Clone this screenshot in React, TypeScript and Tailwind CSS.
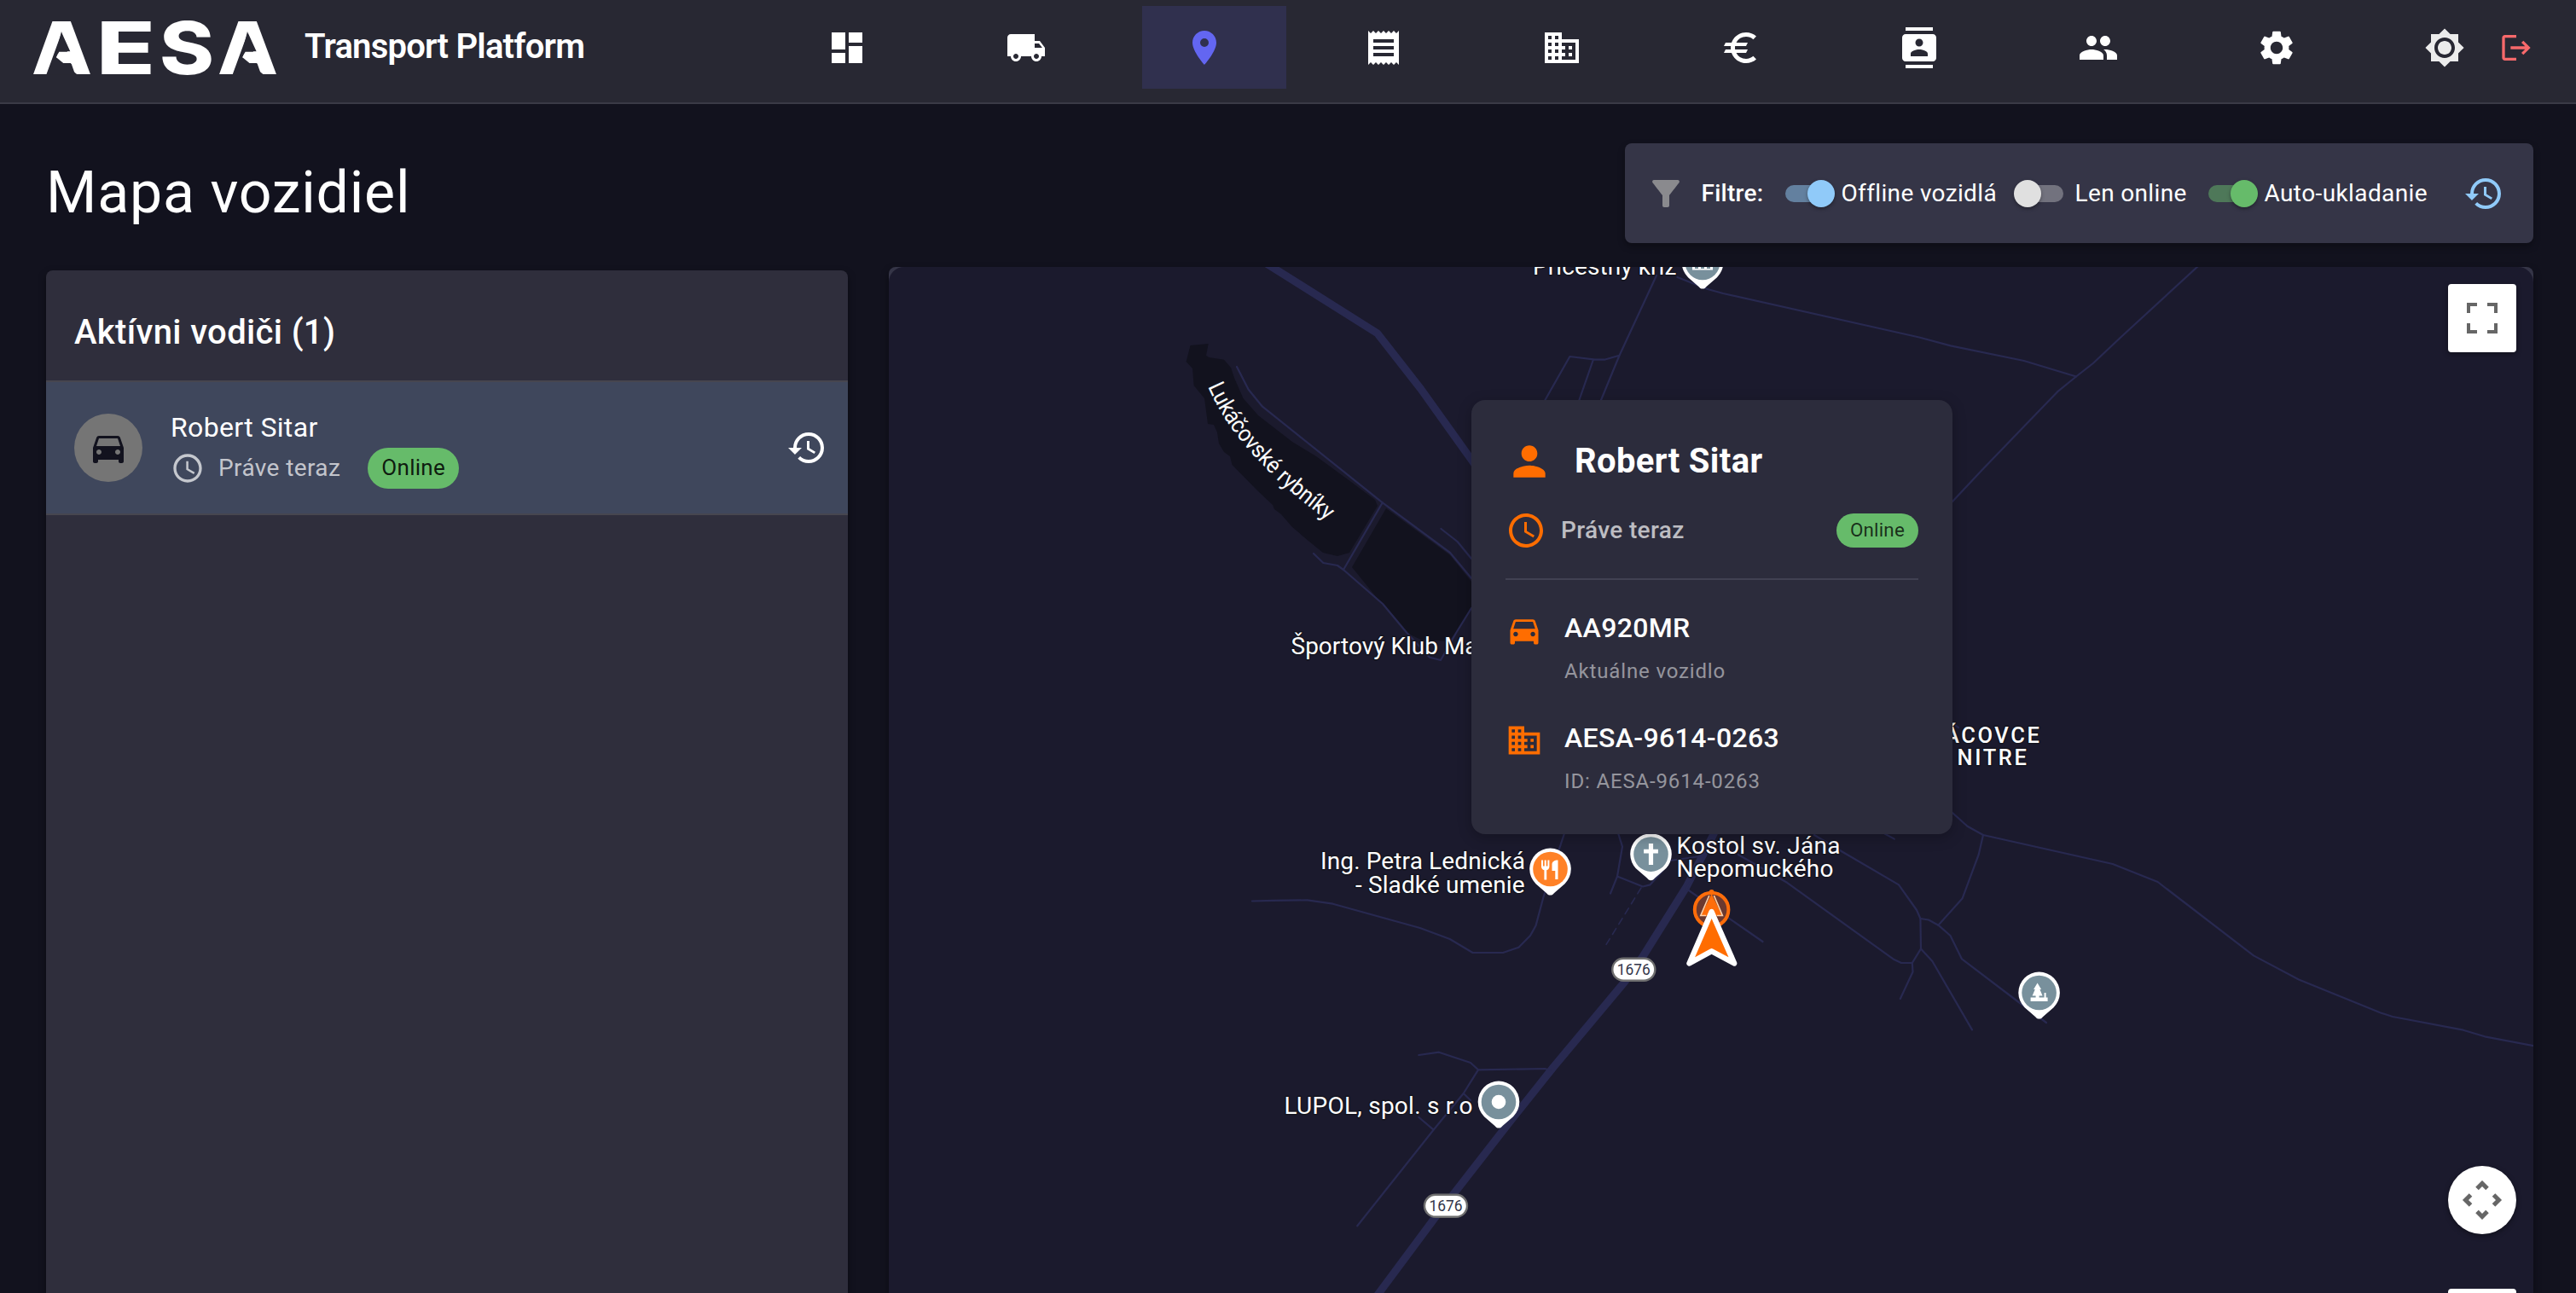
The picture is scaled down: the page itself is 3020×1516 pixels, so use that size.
import type { ReactNode } from "react";
import {
  MdAccessTime,
  MdBrightness7,
  MdBusiness,
  MdContacts,
  MdDashboard,
  MdDirectionsCar,
  MdEuro,
  MdFilterAlt,
  MdHistory,
  MdLocalShipping,
  MdLocationOn,
  MdLogout,
  MdPeople,
  MdPerson,
  MdReceipt,
  MdSettings,
} from "react-icons/md";

const navItems = [
  { id: "dashboard", Icon: MdDashboard, active: false },
  { id: "transports", Icon: MdLocalShipping, active: false },
  { id: "map", Icon: MdLocationOn, active: true },
  { id: "invoices", Icon: MdReceipt, active: false },
  { id: "companies", Icon: MdBusiness, active: false },
  { id: "finance", Icon: MdEuro, active: false },
  { id: "contacts", Icon: MdContacts, active: false },
  { id: "team", Icon: MdPeople, active: false },
  { id: "settings", Icon: MdSettings, active: false },
];

/** The curved notch that opens the crossbar of each A in the wordmark. */
function LogoNotch({ dx }: { dx: number }) {
  return (
    <g transform={`translate(${dx} 0)`}>
      <path d="M72.300 38.300L82.300 60.300H69.300L66 67.300L90.700 87.500H54.300Z" fill="#282833" />
      <path d="M69.300 60.700H84L92 66L100 86.500H91.300C87 75 78.500 68.500 66 67.300Z" fill="#ffffff" />
    </g>
  );
}

function Logo() {
  return (
    <svg className="h-[90px] w-[330px] shrink-0 overflow-visible" viewBox="20 10 330 90" aria-label="AESA">
      <text y="86.600" fill="#ffffff" className="font-['Inter'] text-[85.500px] font-extrabold">
        <tspan x="37" textLength="71" lengthAdjust="spacingAndGlyphs">A</tspan>
        <tspan x="113" textLength="69" lengthAdjust="spacingAndGlyphs">E</tspan>
        <tspan x="187" textLength="64" lengthAdjust="spacingAndGlyphs">S</tspan>
        <tspan x="255" textLength="71" lengthAdjust="spacingAndGlyphs">A</tspan>
      </text>
      <LogoNotch dx={0} />
      <LogoNotch dx={218.3} />
    </svg>
  );
}

function Header() {
  return (
    <header className="flex h-[122px] shrink-0 items-start border-b-2 border-[#3a3a46] bg-[#282833]">
      <div className="flex h-[110px] w-[920px] items-center pl-5">
        <Logo />
        <span className="ml-[7px] whitespace-nowrap text-[40px] font-semibold tracking-[-0.780px] text-white">
          Transport Platform
        </span>
      </div>
      <nav className="flex h-[111px] items-center gap-[40.5px]">
        {navItems.map(({ id, Icon, active }) => (
          <div
            key={id}
            className={
              active
                ? "flex h-[97px] w-[169px] items-center bg-[#30304e] pl-[49px] text-[#6366f1]"
                : "flex h-[97px] w-[169px] items-center pl-[49px] text-white"
            }
          >
            <Icon className="size-12" />
          </div>
        ))}
      </nav>
      <div className="ml-auto flex h-[111px] items-center gap-[40px] pr-[50px]">
        <MdBrightness7 className="size-12 text-[#ececec]" />
        <MdLogout className="size-10 text-[#f8696b]" />
      </div>
    </header>
  );
}

function Toggle({ on, thumb, track }: { on: boolean; thumb: string; track: string }) {
  return (
    <span className="relative flex h-12 w-20 shrink-0 items-center px-3.5">
      <span className={`h-5 w-full rounded-full ${track}`} />
      <span
        className={`absolute top-2 size-8 rounded-full shadow-[0_2px_4px_rgba(0,0,0,0.35)] ${thumb} ${
          on ? "left-10" : "left-2"
        }`}
      />
    </span>
  );
}

function Filters() {
  return (
    <div className="flex h-[117px] w-[1065px] items-center rounded-lg bg-[#353547] text-[28px] text-white shadow-[0_4px_8px_rgba(0,0,0,0.3)]">
      <MdFilterAlt className="ml-6 size-12 text-[#8a8a8e]" />
      <span className="ml-[17.500px] w-[84px] whitespace-nowrap font-medium tracking-[0.250px]">Filtre:</span>
      <Toggle on thumb="bg-[#90caf9]" track="bg-[#63809f]" />
      <span className="w-[194px] whitespace-nowrap tracking-[0.350px]">Offline vozidlá</span>
      <Toggle on={false} thumb="bg-[#e0e0e0]" track="bg-[#72727e]" />
      <span className="w-[142px] whitespace-nowrap tracking-[0.350px]">Len online</span>
      <Toggle on thumb="bg-[#66bb6a]" track="bg-[#4e7859]" />
      <span className="whitespace-nowrap tracking-[0.400px]">Auto-ukladanie</span>
      <MdHistory className="ml-auto mr-[34px] size-12 text-[#90caf9]" />
    </div>
  );
}

function DriversPanel() {
  return (
    <aside className="mt-1 flex w-[940px] flex-col rounded-t-lg bg-[#2f2e3c] shadow-[0_4px_10px_rgba(0,0,0,0.4)]">
      <h2 className="flex h-[129px] items-center pl-[33px] pt-[16px] text-[40px] font-medium tracking-[0.350px] text-white">
        Aktívni vodiči (1)
      </h2>
      <div className="flex h-[158px] items-center border-y-2 border-[#47464f] bg-[#3f475c] pl-[33px] pr-6">
        <div className="flex size-20 items-center justify-center rounded-full bg-[#757575]">
          <MdDirectionsCar className="size-12 text-[#12121e]" />
        </div>
        <div className="ml-[33px]">
          <div className="text-[32px] leading-[47px] tracking-[0.350px] text-white">Robert Sitar</div>
          <div className="flex h-12 items-center">
            <MdAccessTime className="size-10 text-white/70" />
            <span className="ml-4 text-[28px] tracking-[0.400px] text-white/70">Práve teraz</span>
            <span className="ml-8 flex h-12 items-center rounded-full bg-[#66bb6a] px-4 text-[26px] tracking-[0.300px] text-black/87">
              Online
            </span>
          </div>
        </div>
        <MdHistory className="ml-auto size-12 text-white" />
      </div>
    </aside>
  );
}

/** Teardrop place marker whose round head is centred on (x, y). */
function PlacePin({ x, y, color, children }: { x: number; y: number; color: string; children: ReactNode }) {
  return (
    <g transform={`translate(${x} ${y})`}>
      <path d="M0 30.6c-2 0-3.4-1-4.6-2.6L-17 17.2A24.3 24.3 0 1 1 17 17.2L4.6 28C3.400 29.600 2 30.600 0 30.600z" fill="#ffffff" />
      <circle r="20.300" fill={color} />
      {children}
    </g>
  );
}

function Shield({ x, y }: { x: number; y: number }) {
  return (
    <g transform={`translate(${x} ${y})`}>
      <rect x="-25" y="-13" width="50" height="26" rx="13" fill="#ffffff" stroke="#6f6f6f" strokeWidth="2.400" />
      <text y="6.600" textAnchor="middle" textLength="39" lengthAdjust="spacingAndGlyphs" className="text-[18.600px]" fill="#33364a">
        1676
      </text>
    </g>
  );
}

function MapCanvas() {
  return (
    <svg className="block h-[1203px] w-[1928px]" viewBox="1042 313 1928 1203">
      <g fill="#12121e">
        <path d="M1395.500 405L1416.700 403L1414 417L1417.500 419L1435 421.700L1443 431L1447 443L1457.500 467L1475 487L1515 518L1543 535L1584 565L1612 586L1615 593L1582 648L1568 652L1551 648L1535 635L1515 618L1502 603L1494 597L1492 592L1474 575L1444.500 545L1442 535L1435 530L1429 520L1427 507L1423 498L1416 497L1412 467L1399.600 452L1398 432L1390.600 424Z" />
        <path d="M1625 596L1700 651L1725 682L1725 713L1706.500 742L1698 752L1666 750L1649 742L1619 707L1585 665Z" />
      </g>
      <g fill="none" stroke="#282950" strokeLinejoin="round" strokeLinecap="round">
        <g strokeWidth="9">
          <path d="M1480 306L1614.700 390.700L1665.700 456L1725 539L1750 575" />
          <path d="M2015 960L2009 978L1977 1040L1926 1121.500L1904 1152L1821 1251.400L1763.500 1323.600L1706 1397.600L1680.600 1430L1610 1525" />
        </g>
        <g strokeWidth="2.200">
          <path d="M1450 430L1463.700 456.700L1480 476.700L1620.800 589.300L1700 648L1725 678" />
          <path d="M1620.800 589.300L1575 668" />
          <path d="M1540 649L1551.400 660L1568 663L1575 668L1621 708L1649.400 742L1676 770.700L1689 774L1706.500 743L1725 713" />
          <path d="M1689.400 620L1708.600 635L1725 655" />
          <path d="M1942 323L1898.400 417L1877 469M1811.400 469L1840.400 418L1870 421.700L1881 421.700L1898.400 416.700M1867.800 422L1851.400 469" />
          <path d="M1966.500 325L2002 339L2020 344L2250 395.500L2286.800 405.400L2372.800 423L2434 441.500" />
          <path d="M2577 312L2485.700 396L2453.800 426L2434 441.500L2412 459.400L2375 497.800L2323.700 551L2289 588" />
          <path d="M2280 944L2289 953L2306.500 968.800L2325 979L2476.800 1013L2529.600 1034L2642 1120.400L2695 1148.500L2791 1187.500L2805 1192L2887.800 1207.700L2913 1215.300L2972 1226.500" />
          <path d="M2325 979L2319.700 1002L2300.500 1053.600L2272.400 1084.700" />
          <path d="M2127 979L2160 998.700L2226 1037.400L2247 1067L2251.400 1077L2261 1078.500L2272.400 1084.700L2286.500 1097L2300 1124.400L2366 1174.500L2399 1199" />
          <path d="M2251.400 1077L2252 1112.400L2241.800 1129L2229 1129L2219.500 1124.400L2095 1034.800L2037.800 1002" />
          <path d="M2241.800 1129L2242.500 1139.500L2227.800 1171M2252 1112.400L2265.400 1127L2312 1207.400M2205 975L2220.800 983.600M2286 846L2296 853" />
          <path d="M1468 1056.500L1492.500 1055.800L1532.700 1055.400L1562.600 1059.700L1664.700 1088L1699.700 1101L1726.500 1117L1762 1117L1780.700 1110.600L1794 1097L1800.500 1085.400L1809.400 1052L1833.700 978" />
          <path d="M1897.400 978L1902 992.600L1896 1027.600L1888 1047.500M1896 1027.600L1926 1039.500L1934.400 1037.400L1950 1020M1958 1009L2000 1003L1977 1042L2066.500 1104" />
          <path d="M1924 1041L1881.500 1110" strokeWidth="1.600" strokeDasharray="8 6" />
          <path d="M1663.400 1237L1687 1233.700L1724 1246L1733 1254.300L1811 1253L1818 1255M1733 1254.300L1715.700 1282L1680.600 1324.700L1591.300 1437.300M1715.700 1282L1724 1290M1663.400 1310L1680.600 1324.700" />
        </g>
      </g>

      <path id="ponds-label" d="M1416 453C1438 503 1468 533 1498 563C1515 579 1540 598 1580 630" fill="none" />
      <g fill="#ffffff" stroke="#15151f" strokeWidth="3" paintOrder="stroke" strokeLinejoin="round" className="text-[28px]">
        <text className="text-[27px]">
          <textPath href="#ponds-label" textLength="213" lengthAdjust="spacingAndGlyphs">
            Lukáčovské rybníky
          </textPath>
        </text>
        <text x="1797" y="322.300" textLength="168.500">Prícestný kríž</text>
        <text x="1513.500" y="766.700">Športový Klub Ma</text>
        <text x="1548" y="1019" textLength="240">Ing. Petra Lednická</text>
        <text x="1589" y="1047" textLength="198.500">- Sladké umenie</text>
        <text x="1965.500" y="1000.700" textLength="192">Kostol sv. Jána</text>
        <text x="1965.500" y="1028.300" textLength="184">Nepomuckého</text>
        <text x="1505.500" y="1305.600" textLength="221">LUPOL, spol. s r.o</text>
        <g className="text-[25.500px] font-medium tracking-[2.600px]" textAnchor="end">
          <text x="2393.500" y="871">ÁCOVCE</text>
          <text x="2378.500" y="897">NITRE</text>
        </g>
      </g>

      <PlacePin x={1996} y={308} color="#78909c">
        <path d="M-12 8.500h24V5h-3v2h-4V5h-3v2h-4V5h-3v2h-4V5h-3z" fill="#ffffff" />
      </PlacePin>
      <PlacePin x={1817.500} y={1019} color="#ff8126">
        <path d="M-10.500-10.500h2v7h1.700v-7h2v7h1.700v-7h2v7.500c0 2.300-1.300 3.800-3.200 4.300v11.200h-2.800V1.300c-2-.5-3.400-2-3.400-4.300zM9-10.500v22.500H5.800V2H2v-7.500c0-3 2.500-5 7-5z" fill="#ffffff" />
      </PlacePin>
      <PlacePin x={1935.500} y={1001.600} color="#78909c">
        <path d="M-2.600-12.500h5.200v6.700h5.800v4.600H2.600v13.700h-5.200V-1.200h-5.800v-4.600h5.800z" fill="#ffffff" />
      </PlacePin>
      <PlacePin x={1757} y={1292} color="#78909c">
        <circle r="8.300" fill="#ffffff" />
      </PlacePin>
      <PlacePin x={2390.600} y={1164} color="#78909c">
        <path d="M-2-11.500L2.500-4H.8L4 3.500H0V5.500h6V0h2v5.500h2v4.500h-20v-4.500h6v-2h-4L-4.800-4h-1.700z" fill="#ffffff" />
      </PlacePin>

      <Shield x={1915.300} y={1136.700} />
      <Shield x={1695} y={1413.800} />

      <circle cx="2006.600" cy="1066.500" r="19.800" fill="#6b392f" stroke="#ff6d0a" strokeWidth="4" />
      <circle cx="2006.600" cy="1046" r="3" fill="#ff6d0a" />
      <path d="M2006.600 1048L1993.800 1074H2019.400Z" fill="#ff6d0a" />
      <path d="M2003.800 1050L1993.800 1073.500H2000M2009.400 1050L2019.400 1073.500H2013" fill="none" stroke="#ffd0a6" strokeWidth="1.600" />
      <path d="M2006.600 1069L1980.500 1129.500L2006.600 1115.200L2033.200 1129.500Z" fill="#ff6d00" stroke="#ffffff" strokeWidth="6.400" strokeLinejoin="round" />
    </svg>
  );
}

function InfoRow({ icon, title, caption }: { icon: ReactNode; title: string; caption: string }) {
  return (
    <div className="flex">
      <div className="mt-[9px] h-11 w-[69px]">{icon}</div>
      <div className="whitespace-nowrap">
        <div className="text-[32px] font-medium leading-[56px] tracking-[0.350px] text-white">{title}</div>
        <div className="text-[24px] leading-[46px] tracking-[0.850px] text-white/50">{caption}</div>
      </div>
    </div>
  );
}

function DriverCard() {
  return (
    <div className="absolute left-[683px] top-[156px] flex h-[509px] w-[564px] flex-col rounded-2xl bg-[#2c2c3c] px-10 shadow-[0_4px_16px_rgba(0,0,0,0.25)]">
      <div className="mt-[44px] flex h-[56px] items-center">
        <MdPerson className="size-14 text-[#ff6d00]" />
        <span className="ml-[25px] text-[40px] font-bold tracking-[0.350px] text-white">Robert Sitar</span>
      </div>
      <div className="mt-[29px] flex h-12 items-center">
        <MdAccessTime className="size-12 text-[#ff6d00]" />
        <span className="ml-[17px] text-[28px] font-medium tracking-[0.350px] text-white/70">Práve teraz</span>
        <span className="ml-auto flex h-10 items-center rounded-full bg-[#66bb6a] px-4 text-[22.400px] tracking-[0.200px] text-black/75">
          Online
        </span>
      </div>
      <div className="mt-[32px] h-0.5 shrink-0 bg-[#414152]" />
      <div className="mt-[28px] flex flex-col gap-[27px]">
        <InfoRow icon={<MdDirectionsCar className="size-11 text-[#ff6d00]" />} title="AA920MR" caption="Aktuálne vozidlo" />
        <InfoRow icon={<MdBusiness className="size-11 text-[#ff6d00]" />} title="AESA-9614-0263" caption="ID: AESA-9614-0263" />
      </div>
    </div>
  );
}

function MapControls() {
  return (
    <>
      <div className="absolute right-5 top-5 flex size-20 items-center justify-center rounded bg-white shadow-[0_2px_6px_rgba(0,0,0,0.4)]">
        <svg className="size-9" viewBox="0 0 18 18" fill="#666666">
          <path d="M0 0v6h2V2h4V0H0zm16 0h-4v2h4v4h2V0h-2zm0 16h-4v2h6v-6h-2v4zM2 12H0v6h6v-2H2v-4z" />
        </svg>
      </div>
      <div className="absolute right-5 top-[1053.5px] flex size-20 items-center justify-center rounded-full bg-white shadow-[0_2px_6px_rgba(0,0,0,0.4)]">
        <svg className="size-12" viewBox="-24 -24 48 48" fill="none" stroke="#666666" strokeWidth="5">
          <path d="M-6-13.500L0-19.500L6-13.500M-6 13.500L0 19.500L6 13.500M-13.500-6L-19.500 0L-13.500 6M13.500-6L19.500 0L13.500 6" />
        </svg>
      </div>
      <div className="absolute right-5 top-[1198px] h-40 w-20 rounded bg-white" />
    </>
  );
}

export default function App() {
  return (
    <div className="flex h-[1516px] w-[3020px] flex-col overflow-hidden bg-[#12121e] font-['Roboto',sans-serif]">
      <Header />
      <main className="flex flex-col pl-[54px] pr-[50px]">
        <div className="flex items-start justify-between pt-[46px]">
          <h1 className="pt-[1px] text-[68px] leading-[114px] tracking-[0.800px] text-white">Mapa vozidiel</h1>
          <Filters />
        </div>
        <div className="mt-7 flex h-[1203px] items-stretch justify-between">
          <DriversPanel />
          <section className="relative w-[1928px] overflow-hidden rounded-t-lg bg-[#353547] shadow-[0_4px_10px_rgba(0,0,0,0.4)]">
            <div className="overflow-hidden rounded-t-[18px] bg-[#1b1a2d]">
              <MapCanvas />
            </div>
            <DriverCard />
            <MapControls />
          </section>
        </div>
      </main>
    </div>
  );
}
